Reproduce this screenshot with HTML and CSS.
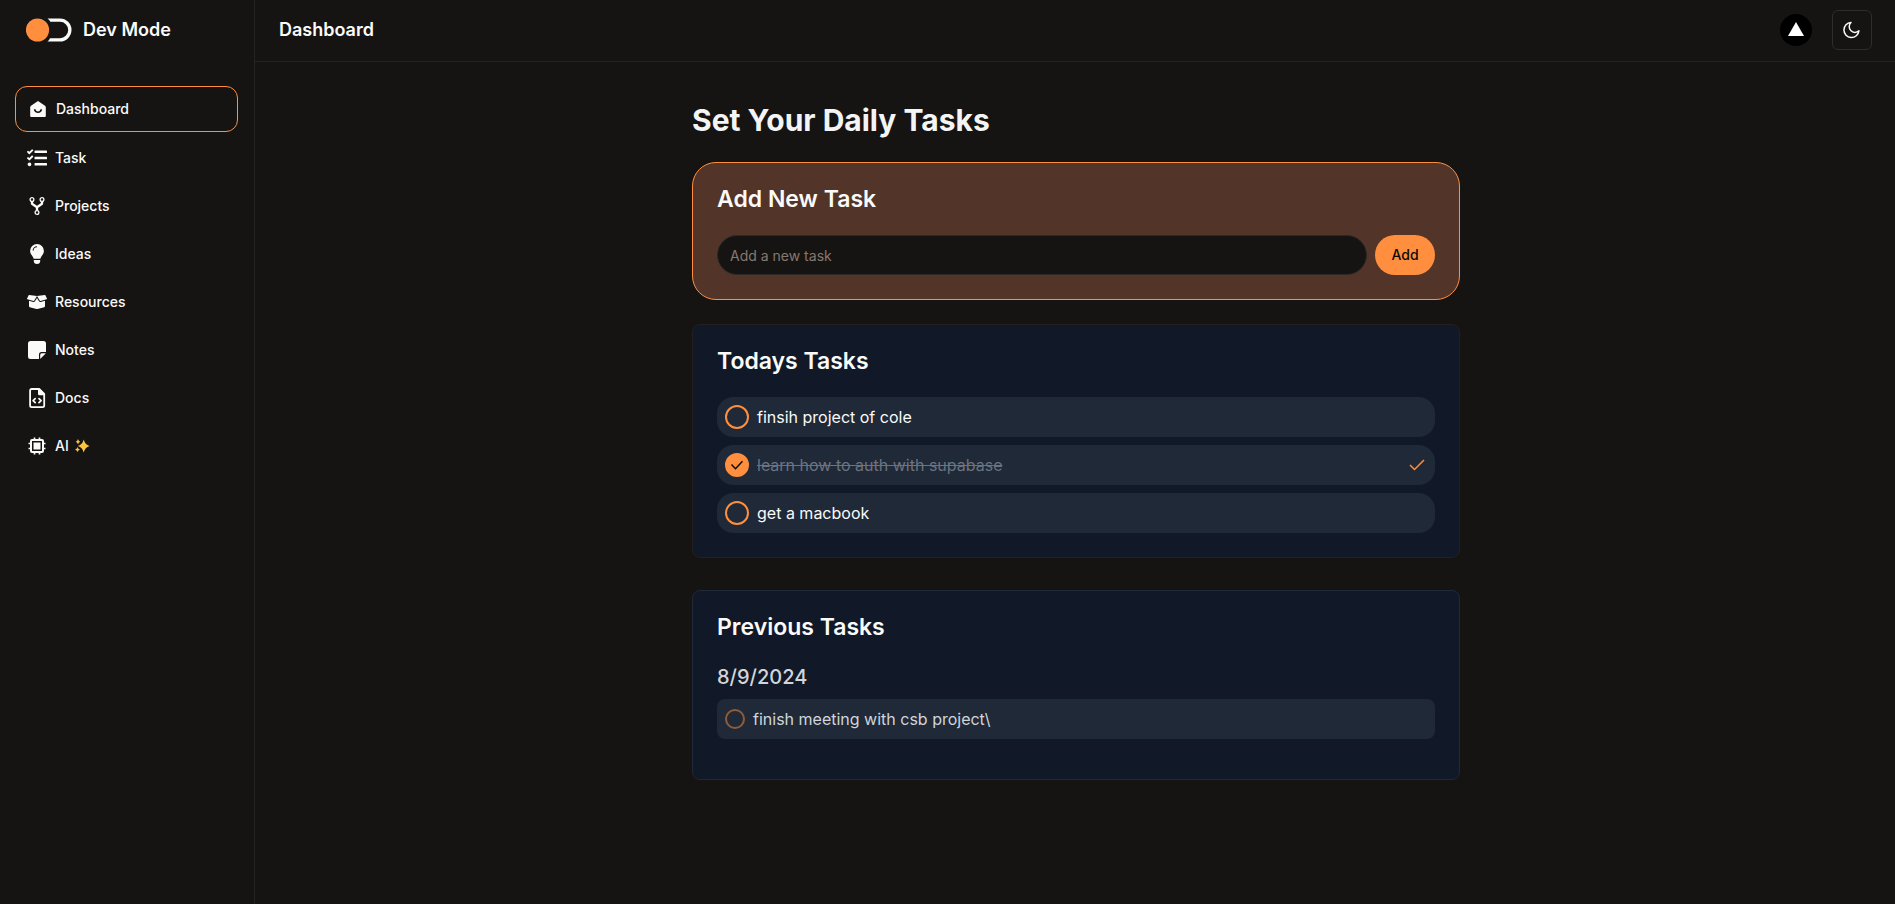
FILE: index.html
```html
<!DOCTYPE html>
<html lang="en">
<head>
<meta charset="utf-8">
<meta name="viewport" content="width=device-width, initial-scale=1">
<title>Dev Mode - Dashboard</title>
<link rel="stylesheet" href="styles.css">
</head>
<body>
<div class="app">
  <aside class="sidebar">
    <a class="brand" href="#">
      <svg class="brand-logo" viewBox="0 0 46 24" aria-hidden="true">
        <circle cx="11.5" cy="12" r="11.6" fill="#ff8f3e"/>
        <path d="M21.5 .5H34a11.5 11.5 0 0 1 0 23H21.5q1.800-1.400 2.500-3.300H34a8.200 8.200 0 0 0 0-16.400H24.300Q23.500 2 21.500.5Z" fill="#fafaf9"/>
      </svg>
      <span>Dev Mode</span>
    </a>
    <nav class="nav">
      <a class="nav-link active" href="#">
        <svg class="icon" viewBox="0 0 20 20" aria-hidden="true"><path fill="currentColor" fill-rule="evenodd" d="M10 2 17 6.700Q17.800 7.300 17.800 8.200V17q0 1-1 1H3.200q-1 0-1-1V8.200q0-.9.8-1.500ZM5.800 10.200Q6.500 14 10 14t4.200-3.800h-1.700Q12 12.400 10 12.400T7.500 10.200Z"/></svg>
        Dashboard</a>
      <a class="nav-link" href="#">
        <svg class="icon" viewBox="0 0 512 512" aria-hidden="true"><path fill="currentColor" d="M139.610 35.500a12 12 0 0 0-17 0L58.930 98.810l-22.700-22.120a12 12 0 0 0-17 0L3.530 92.410a12 12 0 0 0 0 17l47.590 47.400a12.780 12.780 0 0 0 17.610 0l15.590-15.620L156.520 69a12.090 12.090 0 0 0 .09-17zm0 159.190a12 12 0 0 0-17 0l-63.680 63.720-22.700-22.100a12 12 0 0 0-17 0L3.530 252a12 12 0 0 0 0 17L51 316.500a12.770 12.770 0 0 0 17.600 0l15.700-15.690 72.200-72.220a12 12 0 0 0 .09-16.900zM64 368c-26.490 0-48.590 21.500-48.590 48S37.530 464 64 464a48 48 0 0 0 0-96zm432 16H208a16 16 0 0 0-16 16v32a16 16 0 0 0 16 16h288a16 16 0 0 0 16-16v-32a16 16 0 0 0-16-16zm0-320H208a16 16 0 0 0-16 16v32a16 16 0 0 0 16 16h288a16 16 0 0 0 16-16V80a16 16 0 0 0-16-16zm0 160H208a16 16 0 0 0-16 16v32a16 16 0 0 0 16 16h288a16 16 0 0 0 16-16v-32a16 16 0 0 0-16-16z"/></svg>
        Task</a>
      <a class="nav-link" href="#">
        <svg class="icon" viewBox="0 0 20 20" fill="none" stroke="currentColor" aria-hidden="true"><g stroke-width="1.300"><circle cx="5" cy="3.500" r="1.900"/><circle cx="15" cy="3.500" r="1.900"/><circle cx="10" cy="16.500" r="1.900"/></g><path stroke-width="2.300" stroke-linejoin="round" d="M5 5.500v2.200l5 3.500 5-3.500V5.500M10 11v3.600"/></svg>
        Projects</a>
      <a class="nav-link" href="#">
        <svg class="icon" viewBox="0 0 20 20" aria-hidden="true"><path fill="currentColor" fill-rule="evenodd" d="M10 0a6.900 6.900 0 0 1 6.900 6.900c0 3.500-2.700 4.600-3.500 7.800H6.600C5.800 11.500 3.100 10.400 3.100 6.900A6.900 6.900 0 0 1 10 0ZM6.700 6.600A3.300 3.300 0 0 1 10 3.300V2.200a4.400 4.400 0 0 0-4.400 4.400ZM6.800 16h6.400v1.100Q13.200 20 10 20t-3.200-2.900Z"/></svg>
        Ideas</a>
      <a class="nav-link" href="#">
        <svg class="icon" viewBox="0 0 640 512" aria-hidden="true"><path fill="currentColor" d="M425.700 256c-16.900 0-32.800-9-41.400-23.400L320 126l-64.200 106.600c-8.700 14.500-24.600 23.500-41.500 23.500-4.500 0-9-.6-13.300-1.900L64 215v178c0 14.700 10 27.500 24.200 31l216.200 54.100c10.200 2.500 20.900 2.500 31 0L551.800 424c14.200-3.600 24.200-16.400 24.200-31V215l-137 39.100c-4.300 1.300-8.800 1.900-13.300 1.900zm212.600-112.200L586.800 41c-3.100-6.200-9.800-9.800-16.700-8.900L320 64l91.700 152.100c3.800 6.300 11.400 9.300 18.500 7.300l197.900-56.500c9.900-2.900 14.700-13.900 10.200-23.100zM53.200 41L1.700 143.800c-4.600 9.200.3 20.200 10.100 23l197.900 56.500c7.100 2 14.700-1 18.500-7.300L320 64 69.800 32.100c-6.900-.8-13.500 2.700-16.600 8.900z"/></svg>
        Resources</a>
      <a class="nav-link" href="#">
        <svg class="icon" viewBox="0 0 20 20" aria-hidden="true"><path fill="currentColor" d="M3.500 1h13Q19 1 19 3.500V12h-4.500Q12 12 12 14.500V19H3.500Q1 19 1 16.500v-13Q1 1 3.500 1Z"/><path fill="currentColor" d="M13.200 18.900v-4.200q0-1.500 1.500-1.500h4.200Z"/></svg>
        Notes</a>
      <a class="nav-link" href="#">
        <svg class="icon" viewBox="0 0 20 20" fill="none" stroke="currentColor" aria-hidden="true"><path stroke-width="1.800" stroke-linejoin="round" d="M4.700 1h7.500l5 5v11.500q0 1.600-1.600 1.600H4.700q-1.600 0-1.600-1.600V2.600Q3.100 1 4.700 1Z"/><path fill="currentColor" stroke="none" d="M11 1h1.600l5 5v1.300h-5.100q-1.500 0-1.500-1.500Z"/><path stroke-width="1.700" stroke-linecap="round" stroke-linejoin="round" d="m8.200 10.700-2.100 2 2.100 2m3.800-4 2.100 2-2.100 2"/></svg>
        Docs</a>
      <a class="nav-link" href="#">
        <svg class="icon" viewBox="0 0 20 20" fill="none" stroke="currentColor" aria-hidden="true"><rect x="4" y="4" width="12" height="12" rx="1" stroke-width="2"/><path fill="currentColor" stroke="none" d="M6.500 6.500h7v7h-7Z"/><path stroke-width="1.700" d="M7.500 1.500v2m5-2v2m-5 13v2m5-2v2M1.500 7.500h2m-2 5h2m13-5h2m-2 5h2"/></svg>
        AI
        <svg class="sparkles" viewBox="0 0 16 16" aria-hidden="true"><path fill="#fcc43e" d="M9.700 1.500Q11 6.700 15.500 8 11 9.300 9.700 14.500 8.400 9.300 3.900 8 8.400 6.700 9.700 1.500ZM4 1Q4.500 3.200 6.200 3.700 4.500 4.200 4 6.400 3.500 4.200 1.800 3.700 3.500 3.200 4 1ZM3.500 8.900Q4 11 6 11.500 4 12 3.500 14.100 3 12 1 11.500 3 11 3.500 8.900Z"/></svg></a>
    </nav>
  </aside>

  <div class="page">
    <header class="topbar">
      <p class="topbar-title">Dashboard</p>
      <div class="topbar-actions">
        <button class="avatar" type="button" aria-label="Account">
          <svg viewBox="0 0 32 32" aria-hidden="true"><path fill="#fff" d="M16 8 24 22H8Z"/></svg>
        </button>
        <button class="theme-toggle" type="button" aria-label="Toggle theme">
          <svg class="icon" viewBox="0 0 20 20" fill="none" stroke="currentColor" stroke-width="1.500" stroke-linecap="round" stroke-linejoin="round" aria-hidden="true"><path d="M9 2.500a7.500 7.500 0 1 0 7.900 8.300 5.600 5.600 0 0 1-7.900-8.300Z"/></svg>
        </button>
      </div>
    </header>

    <main class="main">
      <div class="content">
        <h1 class="title">Set Your Daily Tasks</h1>

        <section class="card card-accent">
          <h2 class="card-title">Add New Task</h2>
          <form class="add-form">
            <input class="text-input" type="text" placeholder="Add a new task" aria-label="New task">
            <button class="add-button" type="button">Add</button>
          </form>
        </section>

        <section class="card card-today">
          <h2 class="card-title">Todays Tasks</h2>
          <ul class="task-list">
            <li class="task">
              <label class="task-label"><span class="check"><input type="checkbox"></span>finsih project of cole</label>
            </li>
            <li class="task">
              <label class="task-label done"><span class="check"><input type="checkbox" checked><svg viewBox="0 0 24 24" aria-hidden="true"><path d="m6.500 11.500 4 4.200 7-7.500"/></svg></span><s>learn how to auth with supabase</s></label>
              <svg class="done-mark" viewBox="0 0 24 24" aria-hidden="true"><path d="m7 12 4.500 4.500L21 7"/></svg>
            </li>
            <li class="task">
              <label class="task-label"><span class="check"><input type="checkbox"></span>get a macbook</label>
            </li>
          </ul>
        </section>

        <section class="card card-previous">
          <h2 class="card-title">Previous Tasks</h2>
          <h3 class="date">8/9/2024</h3>
          <ul class="task-list">
            <li class="task task-past">
              <label class="task-label"><span class="check check-small"><input type="checkbox" disabled></span>finish meeting with csb project\</label>
            </li>
          </ul>
        </section>
      </div>
    </main>
  </div>
</div>
</body>
</html>
```

FILE: styles.css
```css
:root {
  --bg: #161412;
  --line: #242321;
  --text: #fafaf9;
  --orange: #ff8f3e;
}

* { box-sizing: border-box; }

body {
  margin: 0;
  background: var(--bg);
  color: var(--text);
  font-family: Inter, "Liberation Sans", sans-serif;
  font-size: 16px;
  line-height: 24px;
}

h1, h2, h3, p, ul { margin: 0; }
ul { padding: 0; list-style: none; }
a { color: inherit; text-decoration: none; }
button, input { font: inherit; color: inherit; margin: 0; }

.icon { width: 20px; height: 20px; flex: none; }

.app {
  display: grid;
  grid-template-columns: 255px 1fr;
  min-height: 100vh;
}

.sidebar { border-right: 1px solid var(--line); }

.brand {
  display: flex;
  align-items: center;
  gap: 11px;
  height: 60px;
  padding-left: 26px;
  font-size: 18px;
  font-weight: 600;
}
.brand-logo { width: 46px; height: 24px; }

.nav {
  display: flex;
  flex-direction: column;
  gap: 4px;
  padding: 26px 16px 0 15px;
}
.nav-link {
  display: flex;
  align-items: center;
  gap: 8px;
  padding: 12px;
  font-size: 14px;
  font-weight: 500;
  line-height: 20px;
}
.nav-link.active {
  border: 1px solid var(--orange);
  border-radius: 12px;
}
.sparkles { width: 16px; height: 16px; margin-left: -3px; }

.topbar {
  display: flex;
  align-items: center;
  justify-content: space-between;
  padding: 10px 23px 11px 24px;
  border-bottom: 1px solid var(--line);
}
.topbar-title { font-size: 18px; font-weight: 600; }
.topbar-actions { display: flex; align-items: center; gap: 20px; }

.avatar {
  width: 32px;
  height: 32px;
  padding: 0;
  border: 0;
  border-radius: 50%;
  background: #000;
}
.avatar svg { display: block; }

.theme-toggle {
  display: grid;
  place-items: center;
  width: 40px;
  height: 40px;
  padding: 0;
  border: 1px solid #2e2d2b;
  border-radius: 6px;
  background: transparent;
}

.main { padding: 40px 24px 40px 26px; }
.content { max-width: 768px; margin: 0 auto; }

.title {
  margin-bottom: 24px;
  color: #f3f4f6;
  font-size: 30px;
  font-weight: 700;
  line-height: 36px;
}

.card {
  padding: 24px;
  border: 1px solid #22211f;
  border-radius: 8px;
  background: #111827;
}
.card-accent {
  border-color: var(--orange);
  border-radius: 24px;
  background: #533428;
}
.card-today { margin-top: 24px; }
.card-previous {
  margin-top: 32px;
  padding-bottom: 40px;
  border-color: #1f2937;
}
.card-title {
  margin-bottom: 24px;
  font-size: 23px;
  font-weight: 600;
  line-height: 24px;
}

.add-form { display: flex; gap: 8px; }
.text-input {
  flex: 1;
  min-width: 0;
  height: 40px;
  padding: 8px 12px;
  border: 1px solid #2b2a28;
  border-radius: 20px;
  background: var(--bg);
  font-size: 14px;
}
.text-input::placeholder { color: #87786f; opacity: 1; }
.add-button {
  min-width: 60px;
  height: 40px;
  padding: 0 16px;
  border: 0;
  border-radius: 20px;
  background: var(--orange);
  color: #0c0a09;
  font-size: 14px;
  font-weight: 500;
}

.task-list { display: grid; gap: 8px; }
.task {
  display: flex;
  align-items: center;
  justify-content: space-between;
  padding: 8px;
  border-radius: 16px;
  background: #1f2937;
}
.task-label { display: flex; align-items: center; gap: 8px; }
.task-label.done { color: #6b7280; }
.task-past { border-radius: 8px; color: #d1d5db; }

.check { display: grid; width: 24px; height: 24px; }
.check > * { grid-area: 1 / 1; }
.check input {
  appearance: none;
  width: 100%;
  height: 100%;
  border: 2px solid var(--orange);
  border-radius: 50%;
}
.check input:checked { background: var(--orange); }
.check svg, .done-mark {
  width: 24px;
  height: 24px;
  fill: none;
  stroke-width: 1.5;
}
.check svg { stroke: #0c0a09; pointer-events: none; }
.done-mark { stroke: var(--orange); }
.check-small { width: 20px; height: 20px; opacity: 0.5; }

.date {
  margin-bottom: 8px;
  color: #d1d5db;
  font-size: 20px;
  font-weight: 500;
  line-height: 28px;
}
```
